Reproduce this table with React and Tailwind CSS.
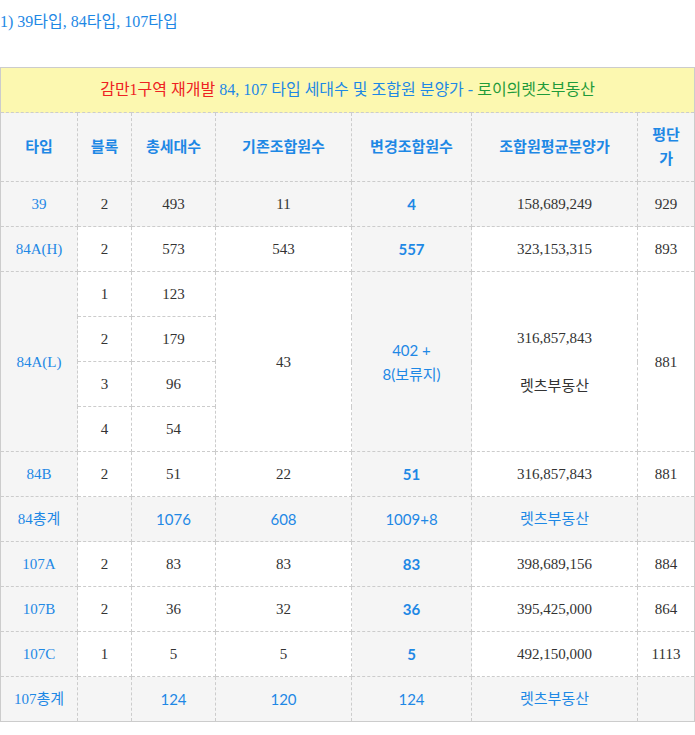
import React from "react";

const font = {
  fontFamily: '"Liberation Serif", "Noto Sans CJK KR", serif',
};

function Td({ children, gray, blue, bold, sans, rowSpan, className = "" }) {
  return (
    <td
      rowSpan={rowSpan}
      className={`border border-dashed border-[#cccccc] py-[10px] px-1 text-center align-middle leading-6 ${
        gray ? "bg-[#f5f5f5]" : "bg-white"
      } ${blue ? "text-[#1e88e5]" : "text-[#333333]"} ${
        bold ? "font-bold" : ""
      } ${sans ? "font-['Lato','Noto_Sans_CJK_KR',sans-serif]" : ""} ${className}`}
    >
      {children}
    </td>
  );
}

function Row({ type, block, total, before, after, price, pyeong, gray }) {
  return (
    <tr>
      <Td gray blue>{type}</Td>
      <Td gray={gray}>{block}</Td>
      <Td gray={gray}>{total}</Td>
      <Td gray={gray}>{before}</Td>
      <Td gray blue bold sans>{after}</Td>
      <Td gray={gray}>{price}</Td>
      <Td gray={gray}>{pyeong}</Td>
    </tr>
  );
}

function SumRow({ type, total, before, after }) {
  return (
    <tr>
      <Td gray blue>{type}</Td>
      <Td gray></Td>
      <Td gray blue sans>{total}</Td>
      <Td gray blue sans>{before}</Td>
      <Td gray blue sans>{after}</Td>
      <Td gray blue>렛츠부동산</Td>
      <Td gray></Td>
    </tr>
  );
}

export default function App() {
  return (
    <div className="bg-white min-h-screen text-[15px]" style={font}>
      {/* 제목 */}
      <p className="pt-[10px] leading-6 text-[16px] text-[#1e88e5]">
        1) 39타입, 84타입, 107타입
      </p>

      <table className="mt-[33px] w-[694px] table-fixed border-collapse border border-solid border-[#cccccc]">
        <colgroup>
          <col className="w-[77px]" />
          <col className="w-[54px]" />
          <col className="w-[84px]" />
          <col className="w-[136px]" />
          <col className="w-[120px]" />
          <col className="w-[166px]" />
          <col className="w-[57px]" />
        </colgroup>
        <tbody>
          <tr>
            <td
              colSpan={7}
              className="border border-dashed border-[#cccccc] bg-[#fcf8b0] py-[10px] text-center text-[16px] leading-6"
            >
              <span className="text-[#ee2222]">감만1구역 재개발 </span>
              <span className="text-[#1e88e5]">
                84, 107 타입 세대수 및 조합원 분양가 -{" "}
              </span>
              <span className="text-[#1f9b3a]">로이의렛츠부동산</span>
            </td>
          </tr>
          <tr>
            <Td gray blue bold>타입</Td>
            <Td gray blue bold>블록</Td>
            <Td gray blue bold>총세대수</Td>
            <Td gray blue bold>기존조합원수</Td>
            <Td gray blue bold>변경조합원수</Td>
            <Td gray blue bold>조합원평균분양가</Td>
            <Td gray blue bold className="px-[10px]">평단가</Td>
          </tr>
          <Row type="39" block="2" total="493" before="11" after="4" price="158,689,249" pyeong="929" gray />
          <Row type="84A(H)" block="2" total="573" before="543" after="557" price="323,153,315" pyeong="893" />
          <tr>
            <Td gray blue rowSpan={4}>84A(L)</Td>
            <Td>1</Td>
            <Td>123</Td>
            <Td rowSpan={4}>43</Td>
            <Td gray blue sans rowSpan={4}>
              402 +
              <br />
              8(보류지)
            </Td>
            <Td rowSpan={4}>
              316,857,843
              <br />
              <br />
              렛츠부동산
            </Td>
            <Td rowSpan={4}>881</Td>
          </tr>
          <tr>
            <Td>2</Td>
            <Td>179</Td>
          </tr>
          <tr>
            <Td>3</Td>
            <Td>96</Td>
          </tr>
          <tr>
            <Td>4</Td>
            <Td>54</Td>
          </tr>
          <Row type="84B" block="2" total="51" before="22" after="51" price="316,857,843" pyeong="881" />
          <SumRow type="84총계" total="1076" before="608" after="1009+8" />
          <Row type="107A" block="2" total="83" before="83" after="83" price="398,689,156" pyeong="884" />
          <Row type="107B" block="2" total="36" before="32" after="36" price="395,425,000" pyeong="864" />
          <Row type="107C" block="1" total="5" before="5" after="5" price="492,150,000" pyeong="1113" />
          <SumRow type="107총계" total="124" before="120" after="124" />
        </tbody>
      </table>
    </div>
  );
}
